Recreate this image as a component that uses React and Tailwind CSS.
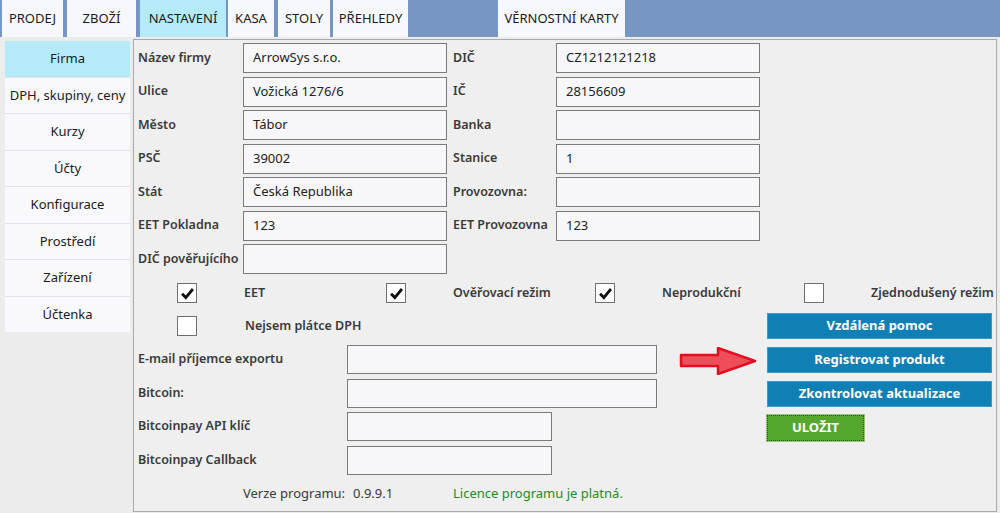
import React from "react";

const tabs = [
  { name: "PRODEJ", w: "w-[61px]", ml: "ml-[2px]" },
  { name: "ZBOŽÍ", w: "w-[69px]", ml: "ml-[4px]" },
  { name: "NASTAVENÍ", w: "w-[86px]", ml: "ml-[4px]", active: true },
  { name: "KASA", w: "w-[46px]", ml: "ml-[2px]" },
  { name: "STOLY", w: "w-[52px]", ml: "ml-[4px]" },
  { name: "PŘEHLEDY", w: "w-[75px]", ml: "ml-[3px]" },
  { name: "VĚRNOSTNÍ KARTY", w: "w-[127px]", ml: "ml-[90px]" },
];

const menu = [
  "Firma",
  "DPH, skupiny, ceny",
  "Kurzy",
  "Účty",
  "Konfigurace",
  "Prostředí",
  "Zařízení",
  "Účtenka",
];

const rows = [
  ["Název firmy", "ArrowSys s.r.o.", "DIČ", "CZ1212121218"],
  ["Ulice", "Vožická 1276/6", "IČ", "28156609"],
  ["Město", "Tábor", "Banka", ""],
  ["PSČ", "39002", "Stanice", "1"],
  ["Stát", "Česká Republika", "Provozovna:", ""],
  ["EET Pokladna", "123", "EET Provozovna", "123"],
  ["DIČ pověřujícího", "", null, null],
];

function Field({ value, w = "w-[204px]", h = "h-[30px]" }) {
  return (
    <div
      className={`${w} ${h} border border-[#7a7a7a] bg-[#f7f7f9] flex items-center pl-[9px] text-[13px] text-[#222]`}
    >
      {value}
    </div>
  );
}

function Check({ checked }) {
  return (
    <div className="w-[20px] h-[20px] border border-[#6f6f6f] bg-white flex items-center justify-center shrink-0">
      {checked && (
        <svg viewBox="0 0 16 16" className="w-[15px] h-[15px]">
          <path
            d="M2.2 8.2 L6.2 12.3 L13.8 3.2"
            fill="none"
            stroke="#111"
            strokeWidth="3"
          />
        </svg>
      )}
    </div>
  );
}

function CheckItem({ checked, label }) {
  return (
    <div className="flex items-center pl-[40px]">
      <Check checked={checked} />
      <span className="ml-[47px] font-semibold text-[12.5px] text-[#3a3a3a] whitespace-nowrap">
        {label}
      </span>
    </div>
  );
}

function BlueButton({ children }) {
  return (
    <button className="w-[225px] h-[26px] bg-[#0f80b6] border border-[#3a9acb] text-white font-bold text-[13px]">
      {children}
    </button>
  );
}

export default function App() {
  return (
    <div
      className="w-[1000px] h-[513px] bg-[#ececec] flex flex-col overflow-hidden text-[13px]"
      style={{ fontFamily: '"Noto Sans", "Open Sans", sans-serif' }}
    >
      {/* tabs */}
      <div className="h-[37px] bg-[#7896c2] flex shrink-0">
        {tabs.map((t) => (
          <div
            key={t.name}
            className={`${t.w} ${t.ml} h-[37px] flex items-center justify-center text-[13px] text-[#1a1a1a] ${
              t.active ? "bg-[#b5ebf8]" : "bg-[#f7f8fd]"
            }`}
          >
            {t.name}
          </div>
        ))}
      </div>

      <div className="flex flex-1 pt-[2px]">
        {/* side menu */}
        <div className="w-[133px] pl-[5px] pt-[2px] shrink-0">
          <div className="w-[125px] flex flex-col gap-px bg-[#e2e2ea]">
            {menu.map((m, i) => (
              <div
                key={m}
                className={`h-[35.5px] flex items-center justify-center text-[#1a1a1a] ${
                  i === 0 ? "bg-[#b5ebf8]" : "bg-[#f8f8fd]"
                }`}
              >
                {m}
              </div>
            ))}
          </div>
        </div>

        {/* main panel */}
        <div className="w-[864px] h-[473px] border border-[#a9a9a9] bg-[#efefef] pl-[4px] pt-[3px] flex flex-col">
          <div className="grid grid-cols-[105px_210px_103px_204px] gap-y-[3.5px]">
            {rows.map((r) => (
              <React.Fragment key={r[0]}>
                <div className="h-[30px] flex items-center font-semibold text-[12.5px] text-[#3a3a3a] whitespace-nowrap">
                  {r[0]}
                </div>
                <div>
                  <Field value={r[1]} />
                </div>
                {r[2] !== null ? (
                  <>
                    <div className="h-[30px] flex items-center font-semibold text-[12.5px] text-[#3a3a3a] whitespace-nowrap">
                      {r[2]}
                    </div>
                    <Field value={r[3]} />
                  </>
                ) : (
                  <>
                    <div />
                    <div />
                  </>
                )}
              </React.Fragment>
            ))}
          </div>

          <div className="grid grid-cols-[209px_209px_209px_209px] mt-[9px] -ml-[1px]">
            <CheckItem checked label="EET" />
            <CheckItem checked label="Ověřovací režim" />
            <CheckItem checked label="Neprodukční" />
            <CheckItem label="Zjednodušený režim" />
          </div>

          <div className="flex mt-[10px]">
            <div className="w-[629px] flex flex-col pt-[3px]">
              <div className="pl-[39px] flex items-center">
                <Check />
                <span className="ml-[48px] font-semibold text-[12.5px] text-[#3a3a3a]">
                  Nejsem plátce DPH
                </span>
              </div>
              <div className="flex flex-col gap-[4.5px] mt-[9px]">
                {[
                  ["E-mail příjemce exportu", "w-[310px]"],
                  ["Bitcoin:", "w-[310px]"],
                  ["Bitcoinpay API klíč", "w-[205px]"],
                  ["Bitcoinpay Callback", "w-[205px]"],
                ].map(([l, w]) => (
                  <div key={l} className="flex items-center">
                    <div className="w-[209px] font-semibold text-[12.5px] text-[#3a3a3a]">
                      {l}
                    </div>
                    <Field value="" w={w} h="h-[29px]" />
                  </div>
                ))}
              </div>
              <div className="flex items-center mt-[9px] h-[20px] text-[#3a3a3a]">
                <span className="ml-[105px] w-[110px]">Verze programu:</span>
                <span className="w-[100px]">0.9.9.1</span>
                <span className="text-[#1f8a1f]">Licence programu je platná.</span>
              </div>
            </div>

            <div className="relative flex flex-col gap-[8px]">
              <BlueButton>Vzdálená pomoc</BlueButton>
              <BlueButton>Registrovat produkt</BlueButton>
              <BlueButton>Zkontrolovat aktualizace</BlueButton>
              <button className="w-[97px] h-[26px] bg-[#55a72d] border border-dotted border-[#2d5f18] outline outline-1 outline-[#8fc56f] text-white font-bold text-[13px]">
                ULOŽIT
              </button>
              <svg
                viewBox="0 0 78 28"
                className="absolute left-[-88px] top-[34px] w-[78px] h-[28px]"
              >
                <polygon
                  points="2,8 39,8 39,1 76,14 39,27 39,19 2,19"
                  fill="#ef4d5a"
                  stroke="#e2101e"
                  strokeWidth="2.5"
                  strokeLinejoin="round"
                />
              </svg>
            </div>
          </div>
        </div>
      </div>
    </div>
  );
}
